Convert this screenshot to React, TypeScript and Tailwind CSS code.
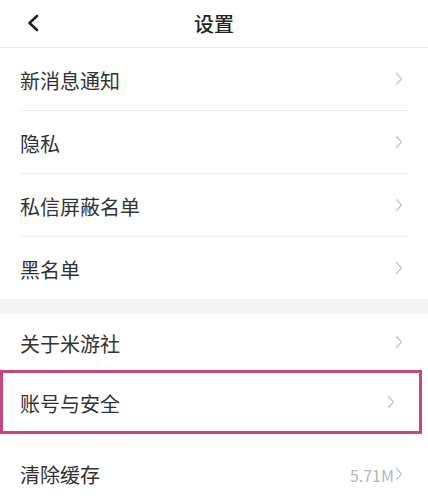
const font = { fontFamily: '"Noto Sans CJK SC", "Noto Sans", sans-serif' }

type Row = { label: string; value?: string; highlight?: boolean; divider?: boolean; height: string }

const groupOne: Row[] = [
  { label: '新消息通知', divider: true, height: 'h-[63px]' },
  { label: '隐私', divider: true, height: 'h-[63px]' },
  { label: '私信屏蔽名单', divider: true, height: 'h-[63px]' },
  { label: '黑名单', height: 'h-[62px]' },
]

const groupTwo: Row[] = [
  { label: '关于米游社', height: 'h-[56px]' },
  { label: '账号与安全', highlight: true, height: 'h-[64px]' },
  { label: '清除缓存', value: '5.71M', height: 'h-[63px] mt-[8px]' },
]

function Chevron() {
  return (
    <svg width="8" height="14" viewBox="0 0 8 14" className="shrink-0">
      <path d="M1.5 1.5 L6.5 7 L1.5 12.5" fill="none" stroke="#c8c8c8" strokeWidth="1.4" strokeLinecap="round" strokeLinejoin="round" />
    </svg>
  )
}

function SettingRow({ row }: { row: Row }) {
  const outer = row.highlight
    ? 'mr-[6px] flex items-center border-[3px] border-[#c4477f] pl-[17px] pr-[19px]'
    : 'mx-[20px] flex items-center'
  return (
    <div className={`${outer} ${row.height}`}>
      <div
        className={
          row.divider
            ? 'flex h-full flex-1 items-center border-b border-[#ececec]'
            : 'flex h-full flex-1 items-center'
        }
      >
        <span className="flex-1 pt-[3px] text-[20px] text-[#333333]">{row.label}</span>
        {row.value && <span className="mr-[1px] pt-[2px] text-[16px] text-[#b8b8b8]">{row.value}</span>}
        <span className="mr-[5px]">
          <Chevron />
        </span>
      </div>
    </div>
  )
}

export default function App() {
  return (
    <div className="h-[500px] w-[428px] overflow-hidden bg-white" style={font}>
      <div className="relative flex h-[48px] items-center justify-center border-b border-[#e8e8e8]">
        <button className="absolute left-[26px] top-[14px]">
          <svg width="14" height="18" viewBox="0 0 14 18">
            <path d="M11 2 L3.5 9 L11 16" fill="none" stroke="#222222" strokeWidth="2.6" strokeLinecap="round" strokeLinejoin="round" />
          </svg>
        </button>
        <span className="pt-[1px] text-[20px] font-medium text-[#222222]">设置</span>
      </div>
      <div>
        {groupOne.map((row) => (
          <SettingRow key={row.label} row={row} />
        ))}
      </div>
      <div className="h-[15px] bg-[#f5f5f5]" />
      <div>
        {groupTwo.map((row) => (
          <SettingRow key={row.label} row={row} />
        ))}
      </div>
    </div>
  )
}
